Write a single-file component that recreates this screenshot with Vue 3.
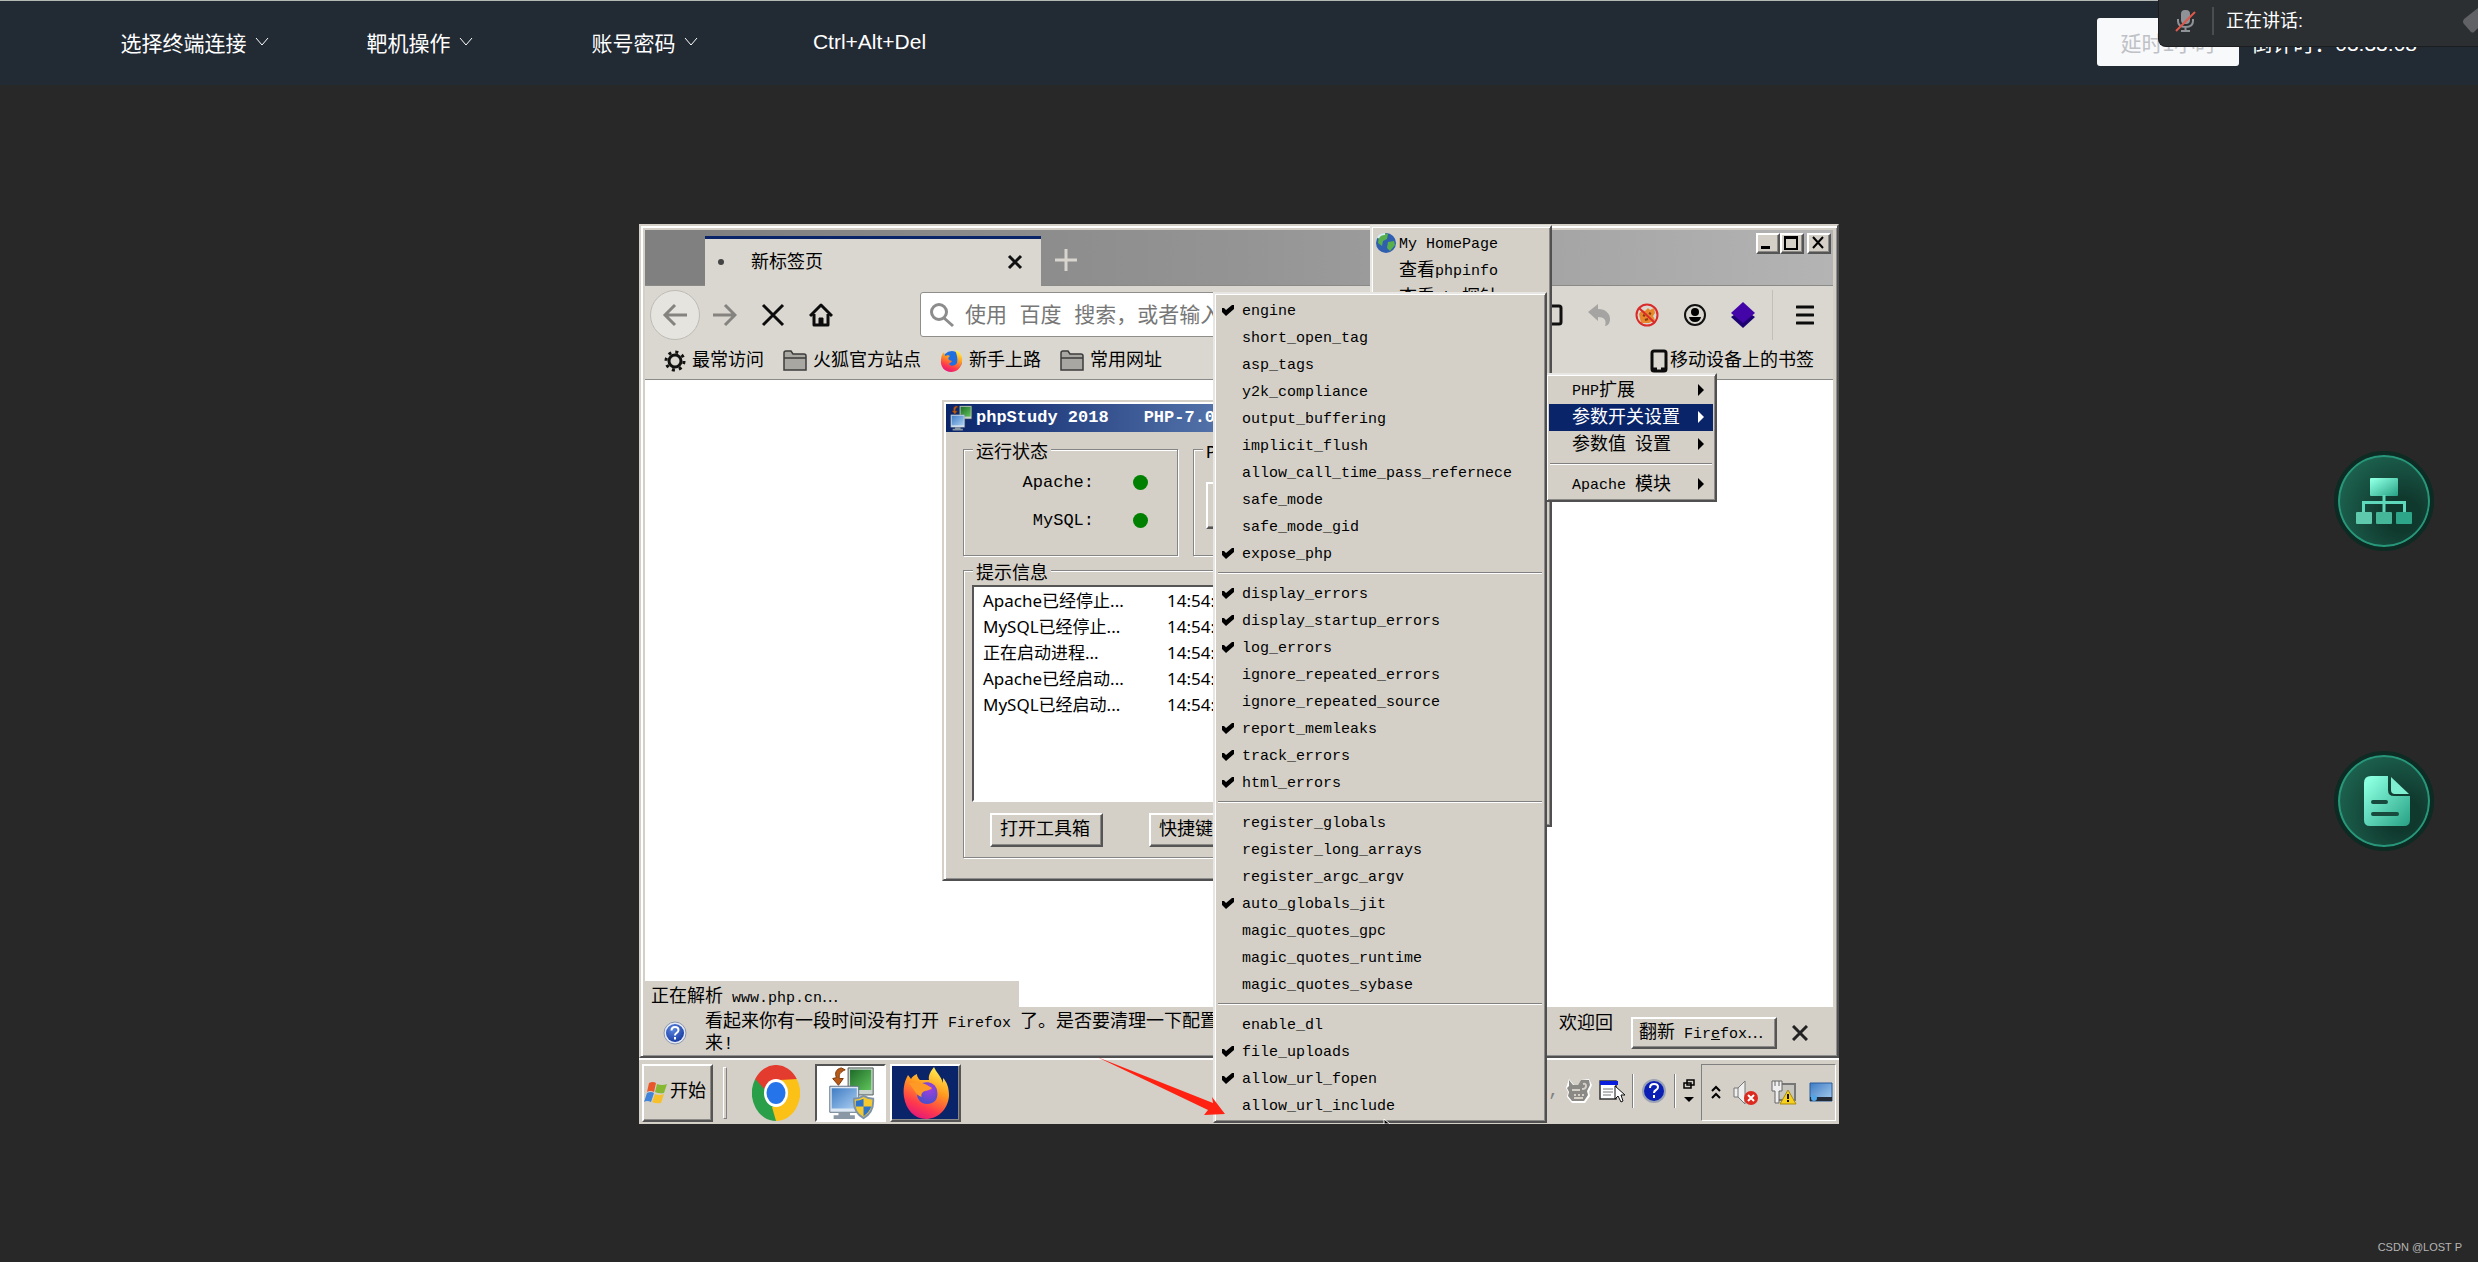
<script setup>
import { ref } from 'vue';

const topMenus = ['选择终端连接', '靶机操作', '账号密码'];

// Saklar php.ini, dibagi per kelompok
const groups = ref([
  [
    { name: 'engine', on: true },
    { name: 'short_open_tag', on: false },
    { name: 'asp_tags', on: false },
    { name: 'y2k_compliance', on: false },
    { name: 'output_buffering', on: false },
    { name: 'implicit_flush', on: false },
    { name: 'allow_call_time_pass_refernece', on: false },
    { name: 'safe_mode', on: false },
    { name: 'safe_mode_gid', on: false },
    { name: 'expose_php', on: true },
  ],
  [
    { name: 'display_errors', on: true },
    { name: 'display_startup_errors', on: true },
    { name: 'log_errors', on: true },
    { name: 'ignore_repeated_errors', on: false },
    { name: 'ignore_repeated_source', on: false },
    { name: 'report_memleaks', on: true },
    { name: 'track_errors', on: true },
    { name: 'html_errors', on: true },
  ],
  [
    { name: 'register_globals', on: false },
    { name: 'register_long_arrays', on: false },
    { name: 'register_argc_argv', on: false },
    { name: 'auto_globals_jit', on: true },
    { name: 'magic_quotes_gpc', on: false },
    { name: 'magic_quotes_runtime', on: false },
    { name: 'magic_quotes_sybase', on: false },
  ],
  [
    { name: 'enable_dl', on: false },
    { name: 'file_uploads', on: true },
    { name: 'allow_url_fopen', on: true },
    { name: 'allow_url_include', on: false },
  ],
]);

const toggle = (item) => {
  item.on = !item.on;
};

const logs = [
  'Apache已经停止...',
  'MySQL已经停止...',
  '正在启动进程...',
  'Apache已经启动...',
  'MySQL已经启动...',
];
</script>

<template>
  <div class="app">
    <!-- Shared icons -->
    <svg class="defs" width="0" height="0" aria-hidden="true">
      <defs>
        <linearGradient id="foxBody" x1="0.7" y1="0" x2="0.3" y2="1">
          <stop offset="0" stop-color="#fff14f" />
          <stop offset="0.4" stop-color="#ff9a1f" />
          <stop offset="0.75" stop-color="#ff3a4c" />
          <stop offset="1" stop-color="#e3157c" />
        </linearGradient>
        <radialGradient id="foxCore" cx="0.6" cy="0.3" r="0.7">
          <stop offset="0" stop-color="#a53ee0" />
          <stop offset="1" stop-color="#4a4fc9" />
        </radialGradient>
        <linearGradient id="scrBlue" x1="0" y1="0" x2="1" y2="1">
          <stop offset="0" stop-color="#3f7cc4" />
          <stop offset="1" stop-color="#a9cdf0" />
        </linearGradient>
        <linearGradient id="scrGreen" x1="0" y1="0" x2="1" y2="1">
          <stop offset="0" stop-color="#1f6b2a" />
          <stop offset="1" stop-color="#5fc45a" />
        </linearGradient>
        <radialGradient id="helpBlue" cx="0.4" cy="0.3" r="0.8">
          <stop offset="0" stop-color="#5a86e0" />
          <stop offset="1" stop-color="#12349c" />
        </radialGradient>
        <linearGradient id="mint" x1="0" y1="0" x2="1" y2="1">
          <stop offset="0.1" stop-color="#8affe0" />
          <stop offset="1" stop-color="#27a083" />
        </linearGradient>
        <symbol id="pcs" viewBox="0 0 48 56">
          <path d="M21 2h26v28H21z" fill="#c9d4cf" stroke="#4d5a55" />
          <path d="M23 4h22v21H23z" fill="url(#scrGreen)" />
          <path d="M2 21h30v27H2z" fill="#dce7f2" stroke="#5c6f85" />
          <path d="M4 23h26v21H4z" fill="url(#scrBlue)" />
          <path d="M11 48h12v3h5v4H6v-4h5z" fill="#8a97a4" />
          <path d="M14 2C8 3 7 8 9 12l-4 1 6 7 5-7-4 0c-1-4 1-7 6-9z" fill="#b85a17" stroke="#7a3608" />
        </symbol>
        <symbol id="fox" viewBox="0 0 46 54">
          <path d="M31 1c-3 4-6 8-5 13l-9 0C14 11 14 9 14 8c-3 1-5 3-6 5L5 9C1 16 0 23 1 31c2 13 11 22 22 22s22-9 23-23c0-8-2-14-6-18v5C38 10 33 6 31 1z" fill="url(#foxBody)" />
          <path d="M16 19c6-5 16-3 18 5 2 9-3 14-10 14-6 0-10-5-10-10z" fill="url(#foxCore)" />
          <path d="M6 17c6-1 14-1 18 2l5 3c-2 3-7 2-9 4-3 3-1 5-1 5-4-1-6-4-6-4z" fill="#ff9a26" />
        </symbol>
      </defs>
    </svg>

    <header class="topbar">
      <nav class="topnav">
        <button v-for="name in topMenus" :key="name" class="topnav-item">
          {{ name }}
          <svg width="14" height="10" viewBox="0 0 14 10" fill="none" stroke="currentColor">
            <path d="M1 1l6 7 6-7" />
          </svg>
        </button>
        <button class="topnav-item">Ctrl+Alt+Del</button>
      </nav>
      <div class="timer">
        <button class="delay" disabled>延时1小时</button>
        <span>倒计时：03:33:08</span>
      </div>
      <div class="talking">
        <svg class="mic" width="22" height="24" viewBox="0 0 22 24" fill="none">
          <rect x="6" y="1" width="9" height="14" rx="4" fill="#8f9296" />
          <path d="M3 10v2c0 4 3 6 7.500 6s7.500-2 7.500-6v-2M10.500 18v4M6 22h9" stroke="#8f9296" stroke-width="2" />
          <path d="M1 22L20 3" stroke="#e0574a" stroke-width="2" />
        </svg>
        <span class="talking-text">正在讲话:</span>
        <svg class="talking-more" width="16" height="30" viewBox="0 0 16 30">
          <path d="M16 2L2 13q-2 3 0 5l7 8q2 1 3 0l4-4z" fill="#606265" />
        </svg>
      </div>
    </header>

    <main class="stage">
      <div class="desktop">
        <!-- Firefox window -->
        <section class="window browser">
          <div class="tabstrip">
            <div class="tab">
              <span class="tab-dot"></span>
              <span class="tab-title">新标签页</span>
              <button class="plain" aria-label="关闭标签页">
                <svg width="16" height="16" viewBox="0 0 16 16" stroke="#111" stroke-width="3"><path d="M2 2l12 12M14 2L2 14" /></svg>
              </button>
            </div>
            <button class="plain newtab" aria-label="新建标签页">
              <svg width="22" height="22" viewBox="0 0 22 22" stroke="#d8d5ce" stroke-width="3"><path d="M11 0v22M0 11h22" /></svg>
            </button>
            <div class="winbtns">
              <button class="bevel winbtn" aria-label="最小化">
                <svg width="18" height="16" viewBox="0 0 18 16"><path d="M3 11h9v3H3z" /></svg>
              </button>
              <button class="bevel winbtn" aria-label="最大化">
                <svg width="18" height="16" viewBox="0 0 18 16"><path d="M2 1h14v14H2zM4 4v9h10V4z" fill-rule="evenodd" /></svg>
              </button>
              <button class="bevel winbtn winbtn-close" aria-label="关闭">
                <svg width="18" height="16" viewBox="0 0 18 16" stroke="#000" stroke-width="2"><path d="M4 2l10 11M14 2L4 13" /></svg>
              </button>
            </div>
          </div>

          <div class="navbar">
            <button class="plain back" aria-label="后退">
              <svg width="26" height="24" viewBox="0 0 26 24" fill="none" stroke="#85837f" stroke-width="3"><path d="M25 12H3M13 2L3 12l10 10" /></svg>
            </button>
            <div class="navbtns">
              <button class="plain" aria-label="前进">
                <svg width="24" height="24" viewBox="0 0 24 24" fill="none" stroke="#85837f" stroke-width="3"><path d="M0 12h22M12 2l10 10-10 10" /></svg>
              </button>
              <button class="plain" aria-label="停止">
                <svg width="24" height="24" viewBox="0 0 24 24" fill="none" stroke="#0c0c0d" stroke-width="3"><path d="M2 2l20 20M22 2L2 22" /></svg>
              </button>
              <button class="plain" aria-label="主页">
                <svg width="24" height="24" viewBox="0 0 24 24" fill="none" stroke="#0c0c0d" stroke-width="3" stroke-linejoin="round"><path d="M1 13L12 2l11 11M5 11v11h14V11" /><path d="M10 22v-7h4v7z" fill="#0c0c0d" stroke-width="1" /></svg>
              </button>
            </div>
            <label class="search">
              <svg width="24" height="26" viewBox="0 0 24 26" fill="none" stroke="#8c8c8c" stroke-width="3"><circle cx="9" cy="10" r="7.500" /><path d="M14 16l9 8" /></svg>
              <input type="text" aria-label="搜索" placeholder="使用 百度 搜索，或者输入" />
            </label>
            <div class="tools">
              <svg width="24" height="24" viewBox="0 0 24 24" fill="none" stroke="#111" stroke-width="3"><rect x="2" y="3" width="20" height="18" rx="2" /></svg>
              <svg width="24" height="24" viewBox="0 0 24 24"><path d="M1 9l10-8v5c8 0 12 5 12 10 0 4-2 7-5 7 2-6-1-9-7-9v4z" fill="#a5a4a2" /></svg>
              <svg width="24" height="24" viewBox="0 0 24 24"><path d="M4 11l3-4 3 1 3-3 2 2 4-2 1 5-2 3 2 4-6 3H6z" fill="#e8872c" /><path d="M8 12l2 1M14 10l2 1M10 17l3-1" stroke="#8a3d0a" stroke-width="2" /><circle cx="12" cy="12" r="10.500" fill="none" stroke="#d92b2b" stroke-width="2" /><path d="M4 5l16 15" stroke="#d92b2b" stroke-width="2" /></svg>
              <svg width="24" height="24" viewBox="0 0 24 24"><circle cx="12" cy="12" r="10" fill="none" stroke="#111" stroke-width="2" /><circle cx="12" cy="9" r="4" /><path d="M6 14h12q-1 5-6 5t-6-5z" /></svg>
              <svg width="24" height="26" viewBox="0 0 24 26"><path d="M0 15l12 11 12-11-12-8z" fill="#1d0071" /><path d="M0 11L12 0l12 11-12 10z" fill="#4405a8" /></svg>
            </div>
            <button class="plain burger" aria-label="菜单">
              <svg width="18" height="20" viewBox="0 0 18 20" stroke="#0c0c0d" stroke-width="3" stroke-linecap="round"><path d="M1 2h16M1 10h16M1 18h16" /></svg>
            </button>
          </div>

          <div class="bookmarks">
            <a href="#">
              <svg width="22" height="22" viewBox="0 0 22 22" fill="none" stroke="#111"><circle cx="11" cy="11" r="6" stroke-width="3" /><circle cx="11" cy="11" r="9" stroke-width="3" stroke-dasharray="3 4.070" /></svg>
              最常访问
            </a>
            <a href="#">
              <svg width="24" height="22" viewBox="0 0 24 22" fill="#a9a7a1" stroke="#3c3c3c" stroke-width="1.500"><path d="M1 20V3q0-2 2-2h5l2 3h11q2 0 2 2v14zM1 8h22" /></svg>
              火狐官方站点
            </a>
            <a href="#">
              <svg width="23" height="24" viewBox="0 0 23 24"><circle cx="12" cy="12" r="10" fill="#1f6fe0" /><path d="M15 1c6 2 8 7 7 12-1 6-5 10-11 10S0 18 1 11c0-3 1-6 3-8l1 4c2-1 4-1 5 0-2 1-2 3-1 4l3 1c-1 2-3 2-3 3 2 3 6 2 8-1 1-4 0-8-2-13z" fill="url(#foxBody)" /></svg>
              新手上路
            </a>
            <a href="#">
              <svg width="24" height="22" viewBox="0 0 24 22" fill="#a9a7a1" stroke="#3c3c3c" stroke-width="1.500"><path d="M1 20V3q0-2 2-2h5l2 3h11q2 0 2 2v14zM1 8h22" /></svg>
              常用网址
            </a>
            <a href="#" class="mobile">
              <svg width="18" height="24" viewBox="0 0 18 24" fill="none" stroke="#0c0c0d" stroke-width="3"><rect x="2" y="2" width="14" height="20" rx="2" /><path d="M3 20h4M11 20h4" /></svg>
              移动设备上的书签
            </a>
          </div>

          <div class="page">
            <div class="status">正在解析<span class="lat">&nbsp;www.php.cn<span class="cjk">…</span></span></div>
          </div>

          <div class="notice">
            <svg width="24" height="24" viewBox="0 0 24 24"><circle cx="12" cy="12" r="11" fill="#e4e9f3" stroke="#8d98ad" /><circle cx="12" cy="12" r="9" fill="url(#helpBlue)" /><path d="M8.500 9.500q0-3.500 3.500-3.500t3.500 3q0 2-2 3-1.500 1-1.500 2.500M12 16v2.500" fill="none" stroke="#fff" stroke-width="2" /></svg>
            <p class="notice-text">看起来你有一段时间没有打开<span class="lat">&nbsp;Firefox&nbsp;</span>了。是否要清理一下配置<br />来!</p>
            <span class="notice-tail">欢迎回</span>
            <button class="bevel refresh">翻新<span class="lat">&nbsp;Fir<u>e</u>fox<span class="cjk">…</span></span></button>
            <button class="plain" aria-label="关闭通知">
              <svg width="16" height="16" viewBox="0 0 16 16" stroke="#222" stroke-width="3"><path d="M1 1l14 14M15 1L1 15" /></svg>
            </button>
          </div>
        </section>

        <!-- Taskbar -->
        <footer class="taskbar">
          <button class="bevel start">
            <svg width="24" height="24" viewBox="0 0 24 24"><path d="M5 2q4-2 7 0l-2 9q-4-2-7 0z" fill="#e8562a" /><path d="M13 3q5 2 10 0l-3 9q-5 1-9-1z" fill="#86b832" /><path d="M3 12q4-2 7 0l-3 9q-4-2-7 0z" fill="#3f84d8" /><path d="M11 13q4 2 9 0l-3 9q-5 1-9-1z" fill="#f6c02c" /></svg>
            开始
          </button>
          <span class="grip"></span>
          <button class="plain chrome" aria-label="Chrome">
            <svg width="48" height="56" viewBox="0 0 48 48" preserveAspectRatio="none">
              <path d="M24 24L3.200 12A24 24 0 0 1 44.800 12z" fill="#e33b2e" />
              <path d="M24 24l20.800-12A24 24 0 0 1 24 48z" fill="#fbc116" />
              <path d="M24 24v24A24 24 0 0 1 3.200 12z" fill="#2a9f4a" />
              <path d="M24 12h21l-9 12z" fill="#fbc116" />
              <path d="M34 30L24 48l-4-12z" fill="#fbc116" />
              <path d="M14 30L3.200 12l14 2z" fill="#2a9f4a" />
              <path d="M3.200 12h41.600L24 13 14 22z" fill="#e33b2e" />
              <circle cx="24" cy="24" r="12" fill="#fff" />
              <circle cx="24" cy="24" r="9.500" fill="#2674ea" />
            </svg>
          </button>
          <button class="task task-open" aria-label="phpStudy">
            <svg width="48" height="54" viewBox="0 0 48 56"><use href="#pcs" width="48" height="56" /><path d="M37 31q5 3 10 3 1 14-10 20-11-6-10-20 5 0 10-3z" fill="#f4c92f" stroke="#7e93a8" stroke-width="2" /><path d="M37 34v8h-8q0-3 0-6 4 0 8-2zM37 42h8q-2 6-8 10z" fill="#2d73c8" /></svg>
          </button>
          <button class="bevel task task-fox" aria-label="Firefox">
            <svg width="46" height="54"><use href="#fox" width="46" height="54" /></svg>
          </button>

          <div class="langbar">
            <span class="comma">,</span>
            <svg width="26" height="26" viewBox="0 0 26 26"><path d="M3 1l5 6h4l3-5 8-1 3 6-3 7 1 4-5 7H6l-5-6 1-5-2-4z" fill="#fff" /><path d="M3 2l4 5h5l3-5 8 0 1 5-3 6 1 4-4 6H6l-4-5 1-4-2-4 2-2z" fill="#8b8985" /><path d="M6 12h8M8 17h2M12 17h2M16 17h2M8 20h9M17 6q3-1 3 2t-4 3" stroke="#d4d0c8" stroke-width="2" fill="none" /></svg>
            <svg width="26" height="24" viewBox="0 0 26 24"><path d="M1 2h16v18H1z" fill="#fff" stroke="#333" stroke-width="1.500" /><path d="M1 2h18v4H1z" fill="#0a1edc" /><path d="M4 10h10M4 13h10M4 16h8" stroke="#777" /><path d="M16 7v13l3-3 3 6 2-1-2-6h4z" fill="#fff" stroke="#111" /></svg>
            <span class="bar"></span>
            <svg width="26" height="26" viewBox="0 0 26 26"><circle cx="13" cy="13" r="12" fill="#9aa2b5" /><circle cx="13" cy="13" r="10" fill="#0b1fb5" /><path d="M9 10q0-4 4-4t4 3q0 2-2 3-2 1-2 3M13 17v3" fill="none" stroke="#fff" stroke-width="2" /></svg>
            <span class="bar"></span>
            <svg width="12" height="24" viewBox="0 0 12 24"><path d="M4 1h7v5H4zM1 4h7v5H1z" fill="#d4d0c8" stroke="#000" stroke-width="1.500" /><path d="M1 18h10l-5 5z" /></svg>
          </div>
          <div class="tray">
            <svg width="10" height="16" viewBox="0 0 10 16" fill="none" stroke="#000" stroke-width="2"><path d="M1 6l4-4 4 4M1 13l4-4 4 4" /></svg>
            <svg width="26" height="26" viewBox="0 0 26 26"><path d="M1 8h4l7-7v23l-7-7H1z" fill="#efefef" stroke="#777" /><path d="M5 8v9" stroke="#777" /><circle cx="18" cy="18" r="7" fill="#dc2a20" /><path d="M15 15l6 6M21 15l-6 6" stroke="#fff" stroke-width="2" /></svg>
            <svg width="26" height="26" viewBox="0 0 26 26"><path d="M7 4h17v16H7z" fill="#c5c5bd" stroke="#777" stroke-width="2" /><path d="M1 1h10v10H8v12H4V11H1z" fill="#efefef" stroke="#666" /><path d="M4 1v5M8 1v5" stroke="#666" /><path d="M17 10l8 14H9z" fill="#f8cf1a" stroke="#a88a10" /><path d="M17 14v5M17 20v2" stroke="#111" stroke-width="2" /></svg>
            <svg width="24" height="22" viewBox="0 0 24 22"><path d="M1 1h22v18H1z" fill="url(#scrBlue)" stroke="#2b5c9c" /><path d="M1 15h22v4H1z" fill="#252b36" /><circle cx="5" cy="16" r="3" fill="#4fa6e8" /></svg>
          </div>
        </footer>

        <!-- phpStudy dialog -->
        <section class="window study">
          <h1 class="study-title">
            <svg width="24" height="26"><use href="#pcs" width="24" height="26" /></svg>
            <span>phpStudy 2018</span>
            <span class="study-ver">PHP-7.0</span>
          </h1>
          <div class="study-body">
            <div class="study-row">
              <fieldset class="run">
                <legend>运行状态</legend>
                <div class="svc"><span class="lat-lg">Apache:</span><i class="led"></i></div>
                <div class="svc"><span class="lat-lg">MySQL:</span><i class="led"></i></div>
              </fieldset>
              <fieldset class="ver">
                <legend>PHP</legend>
                <button class="bevel ver-btn" aria-label="PHP"></button>
              </fieldset>
            </div>
            <fieldset class="tips">
              <legend>提示信息</legend>
              <div class="log">
                <table>
                  <tbody>
                    <tr v-for="line in logs" :key="line">
                      <td class="log-msg">{{ line }}</td>
                      <td>14:54:</td>
                    </tr>
                  </tbody>
                </table>
              </div>
              <div class="study-btns">
                <button class="bevel">打开工具箱</button>
                <button class="bevel">快捷键</button>
              </div>
            </fieldset>
          </div>
        </section>

        <!-- Context menus -->
        <div class="menu menu-main" role="menu">
          <button class="item" role="menuitem">
            <svg class="globe" width="22" height="22" viewBox="0 0 22 22"><circle cx="11" cy="11" r="10" fill="#2f5fae" /><path d="M4 4q5-4 9-2l-1 5-4 2-1 5-4-3zM13 10l6-1 1 4-5 6-3-3z" fill="#57b04a" /><path d="M3 6q2-4 7-4" stroke="#d9ecfa" stroke-width="2" fill="none" /></svg>
            <span class="lat">My HomePage</span>
          </button>
          <button class="item" role="menuitem">查看<span class="lat">phpinfo</span></button>
          <button class="item" role="menuitem">查看<span class="lat">php</span>探针</button>
        </div>

        <div class="menu menu-php" role="menu">
          <button class="item" role="menuitem"><span class="lat">PHP</span>扩展<i class="more"></i></button>
          <button class="item active" role="menuitem">参数开关设置<i class="more"></i></button>
          <button class="item" role="menuitem">参数值<span class="lat">&nbsp;</span>设置<i class="more"></i></button>
          <hr />
          <button class="item" role="menuitem"><span class="lat">Apache&nbsp;</span>模块<i class="more"></i></button>
        </div>

        <div class="menu menu-switch" role="menu">
          <template v-for="(group, i) in groups" :key="i">
            <hr v-if="i > 0" />
            <button
              v-for="item in group"
              :key="item.name"
              class="item"
              role="menuitemcheckbox"
              :aria-checked="item.on"
              @click="toggle(item)"
            >
              <svg v-if="item.on" class="tick" width="12" height="12" viewBox="0 0 12 12"><path d="M0 4h2l2 2 6-5h2v4l-8 7-4-4z" /></svg>
              <span class="lat">{{ item.name }}</span>
            </button>
          </template>
        </div>

        <!-- Mouse pointer, cut off by the screen edge -->
        <svg class="pointer" width="8" height="5" viewBox="0 0 8 5"><path d="M1 0l6 5H1z" stroke="#fff" /></svg>

        <svg class="arrow" width="128" height="60" viewBox="0 0 128 60">
          <path d="M0 0L116 46l-1-6 13 17-21 1 4-5z" fill="#ff2213" />
        </svg>
      </div>
    </main>

    <!-- Floating buttons -->
    <aside class="floats">
      <button class="round" aria-label="拓扑">
        <svg width="56" height="46" viewBox="0 0 56 46" fill="url(#mint)">
          <rect x="14" y="0" width="28" height="18" rx="1" />
          <path d="M26.500 17h3v6H50v12h-3v-9H29.500v9h-3v-9H9v9H6V23h20.500z" fill="#5fd9bb" />
          <rect x="0" y="34" width="16" height="12" rx="1" fill="#5fc9ad" />
          <rect x="20" y="34" width="16" height="12" rx="1" fill="#45b698" />
          <rect x="40" y="34" width="16" height="12" rx="1" fill="#2ca589" />
        </svg>
      </button>
      <button class="round" aria-label="文档">
        <svg class="doc" width="46" height="50" viewBox="0 0 46 50">
          <path d="M7 0h17v14q0 6 6 6h16v24q0 6-6 6H6q-6 0-6-6V7q0-7 7-7z" fill="url(#mint)" />
          <path d="M27 1l18 17H31q-4 0-4-4z" fill="#7eeed0" />
          <path d="M9 26h13M9 38h24" stroke="#17493c" stroke-width="4" stroke-linecap="round" />
        </svg>
      </button>
    </aside>

    <small class="mark">CSDN @LOST P</small>
  </div>
</template>

<style>
body {
  margin: 0;
  background: #282828;
}
</style>

<style scoped>
.app {
  position: relative;
  display: flex;
  flex-direction: column;
  min-height: 100vh;
  background: #282828;
  color: #000;
  font-family: "Liberation Sans", "Noto Sans CJK SC", sans-serif;
  overflow: hidden;
}

.app * {
  box-sizing: border-box;
}

button {
  font: inherit;
  color: inherit;
  padding: 0;
  margin: 0;
  border: 0;
  background: none;
  cursor: pointer;
}

svg {
  display: block;
  flex: none;
}

.defs {
  position: absolute;
}

/* Top bar */
.topbar {
  position: relative;
  display: flex;
  align-items: center;
  justify-content: space-between;
  height: 85px;
  padding: 0 61px 2px 82px;
  border-top: 1px solid #b4b9b6;
  background: #222a34;
  color: #fff;
  font-size: 21px;
}

.topnav {
  display: flex;
}

.topnav-item {
  display: flex;
  align-items: center;
  justify-content: center;
  gap: 8px;
  width: 225px;
  white-space: nowrap;
}

.timer {
  display: flex;
  align-items: center;
  gap: 12px;
  white-space: nowrap;
}

.delay {
  width: 142px;
  height: 48px;
  border-radius: 3px;
  background: #f8f9fb;
  color: #bfc1c6;
}

.talking {
  position: absolute;
  top: -1px;
  right: 0;
  display: flex;
  align-items: center;
  width: 320px;
  height: 47px;
  padding: 0 0 5px 16px;
  border: solid #1c1d1f;
  border-width: 0 0 1px 1px;
  border-bottom-left-radius: 8px;
  background: #2c2f32;
  font-size: 18px;
}

.talking-text {
  margin-left: 15px;
  padding-left: 12px;
  border-left: 2px solid #4a4c50;
  line-height: 28px;
}

.talking-more {
  margin-left: auto;
}

/* Remote desktop */
.stage {
  flex: 1;
  display: flex;
  align-items: center;
  justify-content: center;
}

.desktop {
  position: relative;
  width: 100%;
  max-width: 1200px;
  overflow: hidden;
  background: #fff;
  font-family: "Liberation Mono", "Noto Sans CJK SC", monospace;
  font-size: 18px;
  line-height: 21px;
  white-space: nowrap;
}

.lat {
  font-size: 15px;
}

.lat-lg {
  font-size: 17px;
}

.cjk {
  font-family: "Noto Sans CJK SC", sans-serif;
}

.window {
  border: 2px solid;
  border-color: #d4d0c8 #505050 #505050 #d4d0c8;
  background: #d4d0c8;
  box-shadow: inset 2px 2px #fff, inset -1px -1px #909090;
}

.bevel {
  border: 2px solid;
  border-color: #fff #555 #555 #fff;
  background: #d4d0c8;
  box-shadow: inset -1px -1px #8c8a86;
}

.plain {
  display: flex;
  align-items: center;
  justify-content: center;
}

.browser {
  padding: 4px 4px 1px;
}

.tabstrip {
  display: flex;
  align-items: flex-end;
  height: 56px;
  border-bottom: 1px solid #8a8a88;
  background: linear-gradient(90deg, #808080 5%, #949494 50%, #b4b4b4);
}

.tab {
  display: flex;
  align-items: center;
  width: 336px;
  height: 50px;
  margin: 0 0 -1px 60px;
  padding: 0 18px 0 13px;
  border-top: 3px solid #0a246a;
  background: #dad7d0;
}

.tab-dot {
  width: 6px;
  height: 6px;
  border-radius: 50%;
  background: #444;
}

.tab-title {
  flex: 1;
  margin-left: 27px;
  padding-top: 2px;
}

.newtab {
  margin: 0 0 14px 14px;
}

.winbtns {
  display: flex;
  align-self: flex-start;
  margin: 3px 2px 0 auto;
}

.winbtn {
  width: 24px;
  height: 21px;
}

.winbtn-close {
  margin-left: 3px;
}

.navbar {
  display: flex;
  align-items: center;
  height: 58px;
  padding: 0 19px 0 5px;
  background: #dad7d0;
}

.back {
  width: 50px;
  height: 50px;
  border: 1px solid #bdbbb5;
  border-radius: 50%;
  background: #e6e4df;
}

.navbtns {
  display: flex;
  gap: 24px;
  margin-left: 13px;
}

.search {
  flex: 1;
  display: flex;
  align-items: center;
  gap: 11px;
  min-width: 0;
  height: 45px;
  margin: 0 24px 0 87px;
  padding: 0 9px;
  border: 1px solid #8f8e8b;
  border-radius: 3px;
  background: #fff;
}

.search input {
  flex: 1;
  min-width: 0;
  padding: 3px 0 0;
  border: 0;
  outline: 0;
  background: none;
  font: inherit;
  font-size: 21px;
}

.search input::placeholder {
  color: #777;
  opacity: 1;
}

.tools {
  display: flex;
  align-items: center;
  gap: 24px;
}

.burger {
  height: 50px;
  margin-left: 17px;
  padding-left: 23px;
  border-left: 1px solid #c2bfb9;
}

.bookmarks {
  display: flex;
  align-items: center;
  gap: 19px;
  height: 36px;
  padding: 0 19px;
  border-bottom: 1px solid #8a8a88;
  background: #dad7d0;
}

.bookmarks a {
  display: flex;
  align-items: center;
  gap: 6px;
  color: #000;
  text-decoration: none;
}

.bookmarks .mobile {
  gap: 2px;
  margin-left: auto;
}

.page {
  position: relative;
  min-height: 627px;
  background: #fff;
}

.status {
  position: absolute;
  left: 0;
  bottom: 0;
  width: 374px;
  height: 26px;
  padding: 4px 6px 0;
  background: #d4d0c8;
}

.notice {
  display: flex;
  align-items: center;
  height: 48px;
  padding: 5px 25px 0 18px;
}

.notice-text {
  margin: 0 0 0 18px;
}

.notice-tail {
  align-self: flex-start;
  margin: 0 18px 0 auto;
  line-height: 24px;
}

.refresh {
  width: 146px;
  height: 32px;
  margin-right: 15px;
  padding-left: 6px;
  text-align: left;
}

/* Taskbar */
.taskbar {
  display: flex;
  align-items: center;
  height: 66px;
  padding: 2px 3px 0;
  border-top: 2px solid #fff;
  background: #d4d0c8;
}

.start {
  display: flex;
  align-items: center;
  gap: 2px;
  width: 71px;
  height: 58px;
}

.grip {
  width: 4px;
  height: 52px;
  margin: 0 25px 0 10px;
  border: 1px solid;
  border-color: #fff #808080 #808080 #fff;
}

.task {
  display: flex;
  align-items: center;
  justify-content: center;
  width: 71px;
  height: 58px;
}

.task-open {
  margin: 0 4px 0 15px;
  border: 2px solid;
  border-color: #555 #fff #fff #555;
  background: #fff;
}

.task-fox {
  background: #0a246a;
}

.langbar {
  display: flex;
  align-items: center;
  gap: 7px;
  margin: 0 6px 3px auto;
}

.comma {
  color: #808080;
}

.bar {
  width: 2px;
  height: 34px;
  border-left: 1px solid #808080;
  border-right: 1px solid #fff;
}

.tray {
  display: flex;
  align-items: center;
  justify-content: space-between;
  width: 135px;
  height: 57px;
  padding: 1px 2px 0 9px;
  border: 1px solid;
  border-color: #808080 #fff #fff #808080;
}

/* phpStudy */
.study {
  position: absolute;
  left: 303px;
  top: 176px;
  width: 582px;
  padding: 2px 2px 21px;
}

.study-title {
  display: flex;
  align-items: center;
  gap: 3px;
  height: 28px;
  margin: 0;
  padding-left: 3px;
  background: linear-gradient(90deg, #0a246a, #a6caf0);
  color: #fff;
  font-size: 17px;
  font-weight: bold;
}

.study-ver {
  margin-left: 32px;
}

.study-body {
  display: flex;
  flex-direction: column;
  gap: 3px;
  padding: 6px 17px 0;
}

.study-row {
  display: flex;
  gap: 15px;
}

fieldset {
  min-width: 0;
  margin: 0;
  padding: 0;
  border: 1px solid #858585;
  box-shadow: 1px 1px #fff, inset 1px 1px #fff;
}

legend {
  height: 24px;
  margin-left: 9px;
  padding: 7px 3px 0;
  background: #d4d0c8;
  line-height: 17px;
}

.run {
  width: 215px;
  height: 118px;
}

.ver {
  flex: 1;
}

.ver-btn {
  width: 200px;
  height: 47px;
  margin: 20px 0 0 12px;
}

.svc {
  display: flex;
  align-items: center;
  justify-content: flex-end;
  gap: 39px;
  height: 38px;
  padding: 4px 29px 0 0;
}

.led {
  width: 15px;
  height: 15px;
  border-radius: 50%;
  background: #008000;
}

.tips {
  padding: 2px 8px 10px;
}

.tips legend {
  margin-left: 1px;
}

.log {
  height: 217px;
  padding: 1px 9px;
  border: 2px solid;
  border-color: #555 #fff #fff #555;
  background: #fff;
}

.log table {
  border-collapse: collapse;
  font-family: "Noto Sans", "Noto Sans CJK SC", sans-serif;
  font-size: 17px;
  line-height: 26px;
}

.log td {
  padding: 0;
}

.log .log-msg {
  width: 184px;
}

.study-btns {
  display: flex;
  gap: 46px;
  margin: 11px 0 0 18px;
}

.study-btns button {
  width: 113px;
  height: 34px;
  padding: 2px 8px 0;
  text-align: left;
}

/* Menus */
.menu {
  position: absolute;
  display: flex;
  flex-direction: column;
  padding: 3px 2px 2px;
  border: 2px solid;
  border-color: #e8e6e2 #505050 #505050 #e8e6e2;
  background: #d4d0c8;
  box-shadow: inset 1px 1px #fff, inset -1px -1px #8c8a86;
}

.menu hr {
  width: calc(100% - 2px);
  height: 2px;
  margin: 5px 1px 6px;
  border: 0;
  border-top: 1px solid #808080;
  background: #fff;
}

.item {
  position: relative;
  display: flex;
  align-items: center;
  height: 27px;
  padding: 3px 0 0 25px;
  text-align: left;
}

.item.active {
  background: #0a246a;
  color: #fff;
}

.menu-main {
  left: 731px;
  top: 1px;
  width: 182px;
  height: 602px;
}

.globe {
  position: absolute;
  left: 1px;
  top: 2px;
}

.menu-php {
  left: 906px;
  top: 149px;
  width: 172px;
  padding: 2px;
}

.menu-php .item {
  padding-left: 23px;
}

.more {
  margin: 0 9px 3px auto;
  border: solid transparent;
  border-width: 6px 0 6px 6px;
  border-left-color: currentColor;
}

.menu-switch {
  left: 574px;
  top: 68px;
  width: 334px;
}

.tick {
  position: absolute;
  left: 5px;
  top: 7px;
}

.pointer {
  position: absolute;
  left: 744px;
  bottom: 0;
}

.arrow {
  position: absolute;
  left: 458px;
  top: 833px;
}

/* Floating buttons */
.floats {
  position: absolute;
  top: 451px;
  right: 44px;
  display: flex;
  flex-direction: column;
  gap: 200px;
}

.round {
  display: flex;
  align-items: center;
  justify-content: center;
  width: 100px;
  height: 100px;
  border: 4px solid #0d2a23;
  border-radius: 50%;
  background: radial-gradient(circle at 70% 65%, #10392e 20%, #1f6b55 90%);
  box-shadow: inset 0 0 0 2px #27967a;
}

.doc {
  margin-left: 5px;
}

.mark {
  position: absolute;
  right: 16px;
  bottom: 8px;
  color: #b5b5b5;
  font-size: 11px;
  line-height: 14px;
}
</style>
